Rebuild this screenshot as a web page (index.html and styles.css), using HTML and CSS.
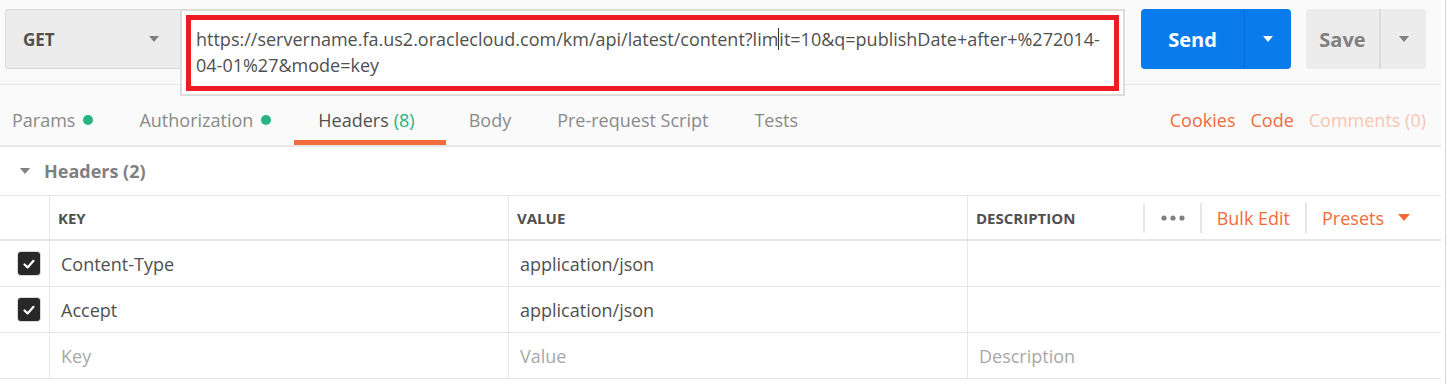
FILE: index.html
```html
<!DOCTYPE html>
<html lang="en">
<head>
    <meta charset="UTF-8">
    <meta name="viewport" content="width=device-width, initial-scale=1.0">
    <title>Request - Headers</title>
    <link rel="stylesheet" href="styles.css">
</head>
<body>

<div class="frame">
<div class="app">

    <div class="top">
        <!-- method, url and the two buttons -->
        <div class="request-bar">
            <div class="method">
                <span class="method-name">GET</span>
                <span class="caret caret-grey"></span>
            </div>

            <div class="url-box">
                <div class="url-mark">
                    https://servername.fa.us2.oraclecloud.com/km/api/latest/content?lim<span class="text-cursor"></span>it=10&amp;q=publishDate+after+%272014-<br>04-01%27&amp;mode=key
                </div>
            </div>

            <div class="send">
                <span class="send-label">Send</span>
                <span class="send-more"><span class="caret caret-white"></span></span>
            </div>

            <div class="save">
                <span class="save-label">Save</span>
                <span class="save-more"><span class="caret caret-grey"></span></span>
            </div>
        </div>

        <!-- request tabs -->
        <div class="tabs">
            <div class="tab-list">
                <div class="tab tab-first">Params <span class="dot"></span></div>
                <div class="tab">Authorization <span class="dot"></span></div>
                <div class="tab active">Headers <span class="count">(8)</span></div>
                <div class="tab">Body</div>
                <div class="tab">Pre-request Script</div>
                <div class="tab">Tests</div>
            </div>
            <div class="tab-links">
                <span class="link">Cookies</span>
                <span class="link">Code</span>
                <span class="link faded">Comments (0)</span>
            </div>
        </div>
    </div>

    <div class="section-head">
        <span class="caret caret-grey"></span>
        Headers (2)
    </div>

    <!-- key / value table -->
    <div class="kv">
        <div class="kv-row kv-head">
            <div class="cell"></div>
            <div class="cell head-cell">KEY</div>
            <div class="cell head-cell">VALUE</div>
            <div class="cell head-cell head-last">
                <span>DESCRIPTION</span>
                <div class="head-tools">
                    <span class="tool tool-dots">
                        <svg width="24" height="6" viewBox="0 0 24 6">
                            <circle cx="3" cy="3" r="2.6" fill="#808080"/>
                            <circle cx="12" cy="3" r="2.6" fill="#808080"/>
                            <circle cx="21" cy="3" r="2.6" fill="#808080"/>
                        </svg>
                    </span>
                    <span class="tool">Bulk Edit</span>
                    <span class="tool tool-presets">Presets <span class="caret caret-orange"></span></span>
                </div>
            </div>
        </div>

        <div class="kv-row">
            <div class="cell check-cell">
                <span class="checkbox">
                    <svg width="14" height="14" viewBox="0 0 14 14"><polyline points="2.5,7.5 5.6,10.4 11.5,3.8" fill="none" stroke="#fff" stroke-width="2.2" stroke-linecap="round" stroke-linejoin="round"/></svg>
                </span>
            </div>
            <div class="cell">Content-Type</div>
            <div class="cell">application/json</div>
            <div class="cell"></div>
        </div>

        <div class="kv-row">
            <div class="cell check-cell">
                <span class="checkbox">
                    <svg width="14" height="14" viewBox="0 0 14 14"><polyline points="2.5,7.5 5.6,10.4 11.5,3.8" fill="none" stroke="#fff" stroke-width="2.2" stroke-linecap="round" stroke-linejoin="round"/></svg>
                </span>
            </div>
            <div class="cell">Accept</div>
            <div class="cell">application/json</div>
            <div class="cell"></div>
        </div>

        <div class="kv-row">
            <div class="cell"></div>
            <div class="cell placeholder">Key</div>
            <div class="cell placeholder">Value</div>
            <div class="cell placeholder">Description</div>
        </div>
    </div>

</div>
</div>

</body>
</html>
```

FILE: styles.css
```css
* {
    padding: 0;
    margin: 0;
    box-sizing: border-box;
}

body {
    background-color: #fff;
    font-family: "Open Sans", "Liberation Sans", sans-serif;
    font-size: 18px;
    color: #505050;
}

.frame {
    width: 1446px;
    border-right: 1px solid #d6d6d6;
    height: 384px;
}

.app {
    width: 1441px;
}

.top {
    background-color: #fafafa;
}

/* request bar */
.request-bar {
    display: flex;
    align-items: flex-start;
    height: 85px;
    padding: 9px 0 0 5px;
    border-bottom: 1px solid #e6e6e6;
}

.method {
    display: flex;
    align-items: center;
    justify-content: space-between;
    width: 175px;
    height: 60px;
    padding: 0 21px 0 17px;
    background-color: #ececec;
    border: 1px solid #dadada;
    border-right: none;
    border-radius: 3px 0 0 3px;
}

.method-name {
    font-weight: 700;
    font-size: 17px;
    color: #505050;
}

.url-box {
    position: relative;
    width: 945px;
    height: 87px;
    padding: 4px 4px 3px 4px;
    background-color: #fff;
    border: 2px solid #dcdcdc;
}

/* red mark drawn on the screenshot */
.url-mark {
    height: 100%;
    padding: 6px 5px;
    border: 5px solid #ed1c24;
    line-height: 26px;
    font-size: 18px;
    color: #505050;
    white-space: nowrap;
}

.text-cursor {
    display: inline-block;
    width: 0;
    height: 22px;
    border-left: 1px solid #333;
    vertical-align: -4px;
}

.send {
    display: flex;
    margin-left: 16px;
    width: 150px;
    height: 60px;
    background-color: #097bed;
    border-radius: 4px;
    color: #fff;
}

.send-label,
.save-label {
    display: flex;
    align-items: center;
    justify-content: center;
    font-weight: 700;
    font-size: 20px;
}

.send-label {
    width: 104px;
    border-right: 1px solid #0a6cd0;
}

.send-more,
.save-more {
    display: flex;
    flex: 1;
    align-items: center;
    justify-content: center;
}

.save {
    display: flex;
    margin-left: 15px;
    width: 120px;
    height: 60px;
    background-color: #ececec;
    border-radius: 4px;
    color: #808080;
}

.save-label {
    width: 75px;
    border-right: 2px solid #dcdcdc;
}

/* css triangles */
.caret {
    display: inline-block;
    width: 0;
    height: 0;
    border-left: 5.5px solid transparent;
    border-right: 5.5px solid transparent;
    border-top: 6px solid #808080;
}

.caret-white {
    border-top-color: #fff;
}

.caret-orange {
    border-top-color: #f26b3a;
}

/* tabs */
.tabs {
    display: flex;
    justify-content: space-between;
    height: 62px;
    border-bottom: 2px solid #e6e6e6;
}

.tab-list {
    display: flex;
}

.tab {
    display: flex;
    align-items: center;
    height: 60px;
    padding: 14px 23px 0 23px;
    border-bottom: 5px solid transparent;
    color: #8a8a8a;
    white-space: nowrap;
}

.tab-first {
    padding-left: 12px;
}

.tab.active {
    padding: 14px 31px 0 24px;
    border-bottom-color: #f26b3a;
    color: #505050;
}

.dot {
    display: inline-block;
    width: 10px;
    height: 10px;
    margin-left: 8px;
    border-radius: 50%;
    background-color: #26b47f;
}

.count {
    margin-left: 5px;
    color: #26b47f;
}

.tab-links {
    display: flex;
    align-items: center;
    gap: 15px;
    padding: 9px 15px 0 0;
}

.link {
    color: #f26b3a;
}

.link.faded {
    color: #f9c5b1;
}

/* headers section title */
.section-head {
    display: flex;
    align-items: center;
    height: 48px;
    padding-left: 20px;
    font-weight: 700;
    color: #808080;
}

.section-head .caret {
    margin-right: 14px;
}

/* table */
.kv {
    border-top: 1px solid #e6e6e6;
}

.kv-row {
    display: grid;
    grid-template-columns: 49px 459px 459px 474px;
    height: 46px;
    border-bottom: 1px solid #e6e6e6;
}

.kv-head {
    height: 45px;
    border-bottom: 2px solid #e6e6e6;
}

.cell {
    display: flex;
    align-items: center;
    padding-left: 11px;
    border-left: 1px solid #e6e6e6;
    color: #505050;
}

.cell:first-child {
    border-left: none;
    padding-left: 0;
}

.head-cell {
    padding-left: 8px;
    font-size: 15px;
    font-weight: 700;
    color: #505050;
}

.head-last {
    justify-content: space-between;
    padding-right: 31px;
}

.head-tools {
    display: flex;
    align-items: center;
    height: 30px;
    font-size: 18px;
    font-weight: 400;
    color: #f26b3a;
}

.tool {
    display: flex;
    align-items: center;
    height: 30px;
    padding: 0 15px;
    border-left: 2px solid #e6e6e6;
}

.tool-dots {
    padding: 0 15px 0 16px;
}

.tool-presets {
    padding-right: 0;
}

.tool-presets .caret {
    margin-left: 14px;
    border-left-width: 6px;
    border-right-width: 6px;
    border-top-width: 7px;
}

.check-cell {
    padding-left: 18px !important;
}

.checkbox {
    display: flex;
    align-items: center;
    justify-content: center;
    width: 22px;
    height: 23px;
    background-color: #282828;
    border-radius: 3px;
    box-shadow: 0 0 0 1px #d8d8d8;
}

.placeholder {
    color: #a8a8a8;
}
```
